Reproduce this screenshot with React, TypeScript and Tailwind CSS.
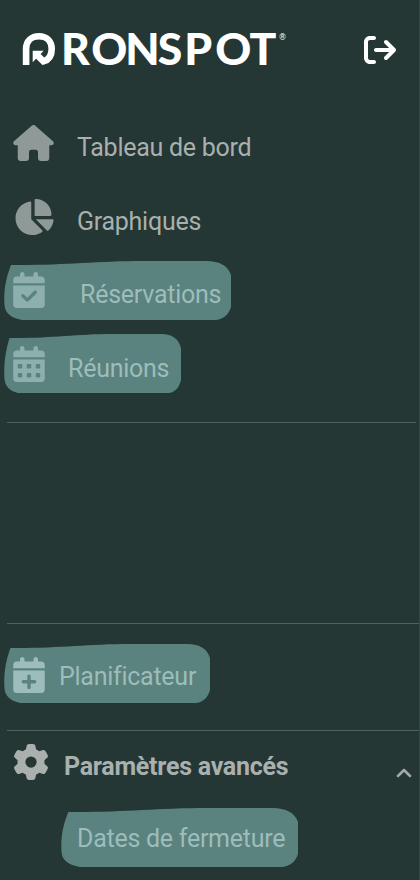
import React from "react";
import {
    FaArrowRightFromBracket,
    FaCalendarCheck,
    FaCalendarDays,
    FaCalendarPlus,
    FaChartPie,
    FaChevronUp,
    FaGear,
    FaHouse,
} from "react-icons/fa6";

function Logo() {
    return (
        <svg className="block overflow-visible" width="270" height="70" viewBox="20 15 270 70" fill="none">
            <path
                d="M26.1 65V49C26.1 41 31.5 36.3 39 36.3C46.8 36.3 51.7 41.5 51.7 49C51.7 55.5 48.5 60 43.4 61.4L36.5 54.5"
                stroke="#fff"
                strokeWidth="6.6"
            />
            <path d="M32.7 50.7H43.7L32.7 62.3Z" fill="#fff"/>
            <text
                x="61 91.3 125.2 157.8 184.2 215.3 249.6"
                y="65"
                fill="#fff"
                className="font-['Lato',sans-serif] text-[44.5px] font-black"
            >
                RONSPOT
            </text>
            <text x="278.6" y="39.6" fill="#fff" className="font-['DejaVu_Sans',sans-serif] text-[8px]">®</text>
        </svg>
    );
}

// Brush-like highlight behind an item, stretched to the item's box
function Highlight() {
    return (
        <svg
            className="absolute inset-0 h-full w-full"
            viewBox="0 0 227 59"
            preserveAspectRatio="none"
            fill="#5a827e"
        >
            <path d="M7 4C60 4.5 90 0 140 0H202C216 0 224 5 227 14V46C225 53 220 58 212 59H18C7 57 1 52 0.5 44C-0.5 29 2 17 7 4Z"/>
        </svg>
    );
}

function NavRow({icon, label}: { icon: React.ReactNode; label: string }) {
    return (
        <div className="flex h-[74px] items-center pl-[13px] text-[#8f9998]">
            <span className="-mt-2">{icon}</span>
            <span className="mt-0.5 ml-[23px] text-[#a9b0ae]">{label}</span>
        </div>
    );
}

function MarkedRow({icon, label, iconClass, labelClass, width}: {
    icon: React.ReactNode;
    label: string;
    iconClass: string;
    labelClass: string;
    width: string;
}) {
    return (
        <div className={`relative ml-1 flex h-[59px] items-start pl-[9px] ${width}`}>
            <Highlight/>
            <span className={`relative ${iconClass}`}>{icon}</span>
            <span className={`relative text-[#9dbdbb] ${labelClass}`}>{label}</span>
        </div>
    );
}

export default function App() {
    return (
        <div className="h-[880px] w-[420px] overflow-hidden border-r border-[#34494a] bg-[#243735] font-['Roboto',sans-serif] text-[25px] leading-[30px] tracking-[-0.26px] whitespace-nowrap">
            <header className="flex h-[110px] items-start justify-between pt-[15px] pr-[23px] pl-5">
                <Logo/>
                <FaArrowRightFromBracket className="mt-[19px] size-8 text-white"/>
            </header>

            <nav className="h-[312px]">
                <NavRow icon={<FaHouse className="h-9 w-[41px]"/>} label="Tableau de bord"/>
                <NavRow icon={<FaChartPie className="h-9 w-[41px]"/>} label="Graphiques"/>
                <div className="flex flex-col gap-3.5 pt-[3px]">
                    <MarkedRow
                        icon={<FaCalendarCheck className="h-9 w-8"/>}
                        label="Réservations"
                        iconClass="mt-[11px] text-[#8db0ae]"
                        labelClass="mt-[19px] ml-[35px]"
                        width="w-[227px]"
                    />
                    <MarkedRow
                        icon={<FaCalendarDays className="h-9 w-8"/>}
                        label="Réunions"
                        iconClass="mt-3 text-[#8db0ae]"
                        labelClass="mt-5 ml-[23px]"
                        width="w-[177px]"
                    />
                </div>
            </nav>

            <div className="mr-[3px] ml-[7px] h-px bg-[#4b6361]"/>
            <div className="mt-[200px] ml-[7px] h-px bg-[#4b6361]"/>

            <div className="mt-5">
                <MarkedRow
                    icon={<FaCalendarPlus className="h-9 w-8"/>}
                    label="Planificateur"
                    iconClass="mt-[13px] text-[#9dbdbb]"
                    labelClass="mt-[18px] ml-[14px]"
                    width="w-[206px]"
                />
            </div>

            <div className="mt-[27px] ml-[7px] h-px bg-[#4b6361]"/>

            <div className="flex h-[71px] items-center pr-[7px] pl-[13px] text-[#a9b0ae]">
                <FaGear className="-mt-2.5 size-9"/>
                <span className="ml-[15px] font-bold">Paramètres avancés</span>
                <FaChevronUp className="mt-3.5 ml-auto size-4" stroke="currentColor" strokeWidth={24}/>
            </div>
            <div className="relative mt-[6px] ml-[61px] flex h-[59px] w-[237px] items-center pl-4">
                <Highlight/>
                <span className="relative mt-0.5 text-[#9dbdbb]">Dates de fermeture</span>
            </div>
        </div>
    );
}
